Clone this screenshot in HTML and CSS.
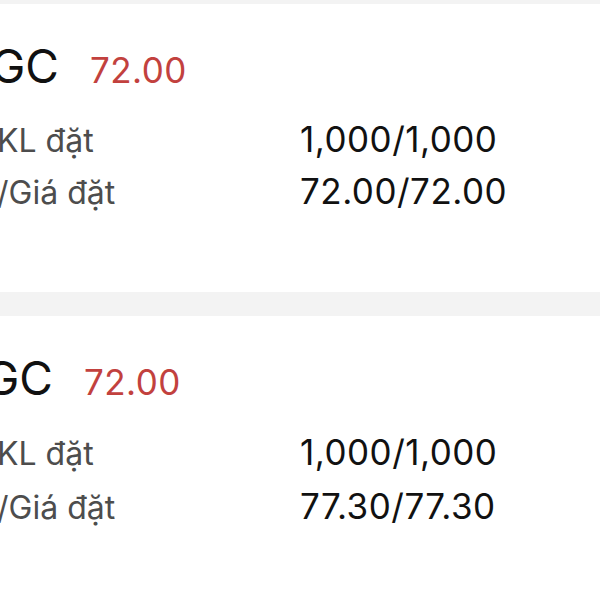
FILE: index.html
```html
<!DOCTYPE html>
<html>
  <head>
    <meta charset="utf-8" />
    <title>Sổ lệnh</title>
    <link rel="stylesheet" href="styles.css">
  </head>
  <body>
    <div id="orders">
      <div class="card">
        <div class="head">
          <span class="ticker">GC</span>
          <span class="price">72.00</span>
        </div>
        <div class="rows">
          <span class="label">KL đặt</span>
          <span class="value">1,000/1,000</span>
          <span class="label cut">/Giá đặt</span>
          <span class="value">72.00/72.00</span>
        </div>
      </div>
      <div class="card second">
        <div class="head">
          <span class="ticker">GC</span>
          <span class="price">72.00</span>
        </div>
        <div class="rows">
          <span class="label">KL đặt</span>
          <span class="value">1,000/1,000</span>
          <span class="label cut">/Giá đặt</span>
          <span class="value">77.30/77.30</span>
        </div>
      </div>
    </div>
  </body>
</html>
```

FILE: styles.css
```css
* {
  box-sizing: border-box;
  font-family: Inter, "Noto Sans", sans-serif;
}
body {
  margin: 0;
  background-color: #f3f3f3;
  overflow: hidden;
}
#orders {
  display: grid;
  grid-gap: 24px;
  padding-top: 4px;
}
.card {
  background-color: #fff;
  height: 288px;
  padding-top: 34px;
  overflow: hidden;
}
.second {
  height: 300px;
}
.head {
  display: flex;
  align-items: baseline;
  line-height: 56px;
  margin-left: -9px;
}
.second .head {
  margin-left: -15px;
}
.ticker {
  font-size: 46px;
  color: #111;
}
.price {
  font-size: 35px;
  letter-spacing: 0.5px;
  color: #c2413e;
  margin-left: 31px;
}
.rows {
  display: grid;
  grid-template-columns: 300px 1fr;
  align-items: baseline;
  line-height: 50px;
  margin-top: 16px;
}
.second .rows {
  line-height: 52px;
}
.label {
  font-size: 32px;
  color: #4d4d4d;
  margin-left: -3px;
}
.label.cut {
  margin-left: -3px;
}
.value {
  font-size: 35px;
  letter-spacing: 0.5px;
  color: #111;
}
```
